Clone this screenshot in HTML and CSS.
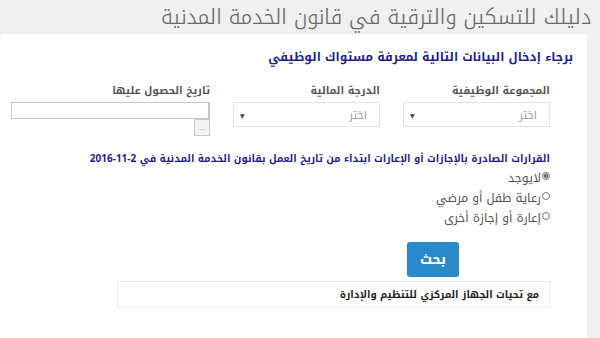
FILE: index.html
```
<!DOCTYPE html>
<html lang="ar" dir="rtl">
<head>
  <meta charset="UTF-8">
  <title>دليلك للتسكين والترقية</title>
  <link rel="stylesheet" href="styles.css">
</head>
<body>

  <h1 class="page-title">دليلك للتسكين والترقية في قانون الخدمة المدنية</h1>

  <div class="panel">
    <p class="intro">برجاء إدخال البيانات التالية لمعرفة مستواك الوظيفي</p>

    <form class="grade-form">
      <div class="fields">
        <div class="field">
          <label>المجموعة الوظيفية</label>
          <div class="select"><span>اختر</span><span class="arrow">▼</span></div>
        </div>
        <div class="field">
          <label>الدرجة المالية</label>
          <div class="select"><span>اختر</span><span class="arrow">▼</span></div>
        </div>
        <div class="field field-date">
          <label>تاريخ الحصول عليها</label>
          <input type="text" class="date-input">
          <button type="button" class="date-btn">...</button>
        </div>
      </div>

      <p class="section-title">القرارات الصادرة بالإجازات أو الإعارات ابتداء من تاريخ العمل بقانون الخدمة المدنية في 2-11-2016</p>

      <ul class="options">
        <li><input type="radio" name="leave" id="r1" checked><label for="r1">لايوجد</label></li>
        <li><input type="radio" name="leave" id="r2"><label for="r2">رعاية طفل أو مرضي</label></li>
        <li><input type="radio" name="leave" id="r3"><label for="r3">إعارة أو إجازة أخرى</label></li>
      </ul>

      <div class="actions">
        <button type="button" class="search-btn">بحث</button>
      </div>

      <div class="note">مع تحيات الجهاز المركزي للتنظيم والإدارة</div>
    </form>
  </div>

</body>
</html>
```

FILE: styles.css
```
* { box-sizing: border-box; }

body {
  margin: 0;
  height: 338px;
  overflow: hidden;
  background: #f0f0f1;
  font-family: 'Noto Kufi Arabic', 'Noto Sans Arabic', 'DejaVu Sans', sans-serif;
  color: #555;
}

.page-title {
  margin: 0;
  padding: 0 9px 0 0;
  font-size: 20.7px;
  font-weight: 300;
  color: #6a6a6a;
  line-height: 34px;
  white-space: nowrap;
}

.panel {
  background: #fff;
  margin-right: 13px;
  height: 304px;
  border-radius: 4px 4px 0 0;
  padding: 13px 14px 0 0;
}

.intro {
  margin: 0;
  font-size: 12px;
  font-weight: bold;
  color: #1d1d8a;
  line-height: 20px;
}

.grade-form {
  padding-right: 23px;
}

.fields {
  display: flex;
  gap: 23px;
  margin-top: 16px;
}

.field {
  width: 147px;
}

.field label {
  display: block;
  font-size: 10.5px;
  font-weight: bold;
  color: #555;
  line-height: 16px;
  margin-bottom: 3px;
}

.select {
  display: flex;
  justify-content: space-between;
  align-items: center;
  height: 25px;
  border: 1px solid #e3e3e3;
  padding: 2px 12px 0 6px;
  font-size: 11px;
  color: #999;
}

.select .arrow {
  font-size: 6px;
  color: #444;
  align-self: flex-start;
  margin-top: 5px;
}

.field-date {
  width: 199px;
  display: flex;
  flex-direction: column;
  align-items: flex-start;
}

.date-input {
  width: 199px;
  height: 17px;
  border: 1px solid #c8c8c8;
  border-right-width: 2px;
  margin: 0;
}

.date-btn {
  width: 16px;
  height: 17px;
  margin: 0;
  padding: 0;
  border: 1px solid #c8c8c8;
  background: #f3f3f3;
  font-size: 7px;
  color: #888;
  line-height: 14px;
}

.section-title {
  margin: 14px 0 0;
  font-size: 10px;
  font-weight: bold;
  color: #1d1d8a;
  line-height: 18px;
}

.options {
  list-style: none;
  margin: 0;
  padding: 0;
}

.options li {
  display: flex;
  align-items: center;
  height: 20px;
}

.options input {
  width: 8px;
  height: 8px;
  margin: 0 0 4px 1px;
  accent-color: #777;
}

.options label {
  font-size: 12px;
  color: #555;
}

.actions {
  display: flex;
  margin: 14px 91px 0 0;
}

.search-btn {
  width: 52px;
  height: 35px;
  border: none;
  border-radius: 3px;
  background: #2a89c9;
  color: #fff;
  font-family: inherit;
  font-size: 14px;
  font-weight: bold;
}

.note {
  width: 433px;
  margin-top: 4px;
  border: 1px solid #ececec;
  padding: 0 10px;
  height: 27px;
  line-height: 25px;
  font-size: 10px;
  font-weight: bold;
  color: #222;
}
```
